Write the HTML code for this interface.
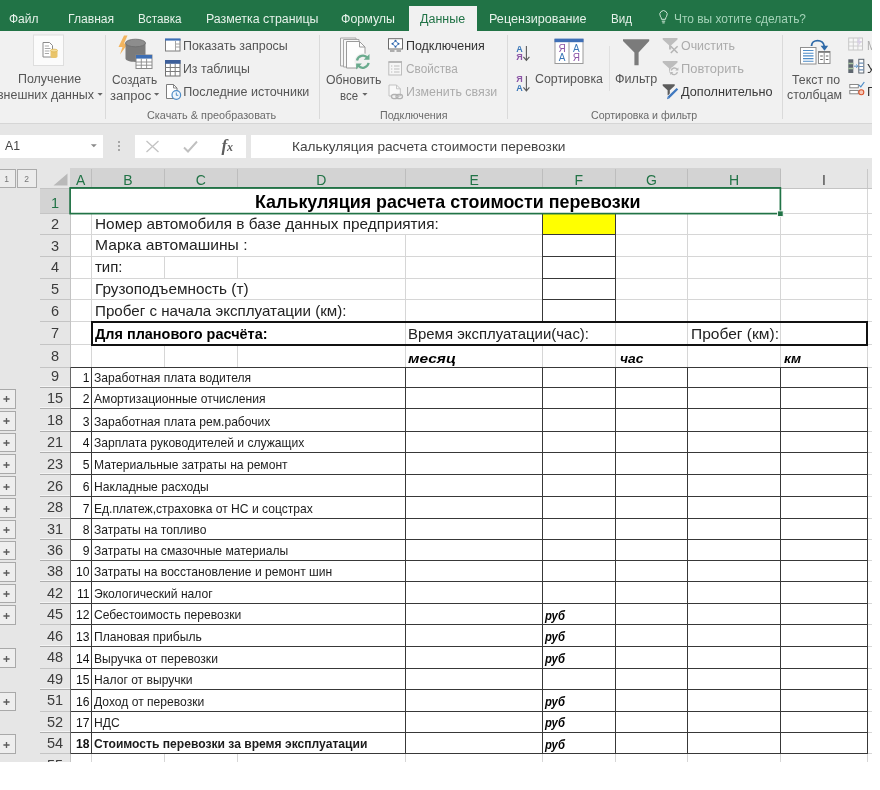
<!DOCTYPE html><html lang="ru"><head><meta charset="utf-8"><title>Калькуляция расчета стоимости перевозки</title><style>
html,body{margin:0;padding:0;background:#fff;}
body{width:880px;height:790px;overflow:hidden;position:relative;font-family:"Liberation Sans",sans-serif;}
#app{position:absolute;left:0;top:0;width:872px;height:762px;overflow:hidden;background:#fff;}
.a{position:absolute;}
.t{position:absolute;white-space:nowrap;transform-origin:0 50%;}
#app{will-change:transform;}
</style></head><body><div id="app">
<div class="a" style="left:0px;top:0px;width:872px;height:31px;background:#217346;"></div>
<div class="a" style="left:0px;top:31px;width:872px;height:92.5px;background:#f1f1f1;"></div>
<div class="a" style="left:408.75px;top:6px;width:68.25px;height:26px;background:#f1f1f1;"></div>
<div class="a" style="left:0px;top:123px;width:872px;height:1px;background:#d6d6d6;"></div>
<div class="a" style="left:0px;top:124px;width:872px;height:638px;background:#e6e6e6;"></div>
<div class="a" style="left:0px;top:134.6px;width:103px;height:23px;background:#fff;"></div>
<div class="a" style="left:135px;top:134.6px;width:111px;height:23px;background:#fff;"></div>
<div class="a" style="left:250.5px;top:134.6px;width:621.5px;height:23px;background:#fff;"></div>
<div class="a" style="left:70px;top:188px;width:802px;height:574px;background:#fff;"></div>
<div class="a" style="left:70px;top:168px;width:710.5px;height:20px;background:#d3d3d3;"></div>
<div class="a" style="left:39.5px;top:188px;width:30.5px;height:25.75px;background:#d3d3d3;"></div>
<div class="a" style="left:104.5px;top:35px;width:1px;height:84px;background:#dadada;"></div>
<div class="a" style="left:319px;top:35px;width:1px;height:84px;background:#dadada;"></div>
<div class="a" style="left:507px;top:35px;width:1px;height:84px;background:#dadada;"></div>
<div class="a" style="left:781.5px;top:35px;width:1px;height:84px;background:#dadada;"></div>
<div class="a" style="left:608.5px;top:46px;width:1px;height:45px;background:#e0e0e0;"></div>
<div class="a" style="left:91px;top:169px;width:1px;height:19px;background:#bdbdbd;"></div>
<div class="a" style="left:164px;top:169px;width:1px;height:19px;background:#bdbdbd;"></div>
<div class="a" style="left:236.5px;top:169px;width:1px;height:19px;background:#bdbdbd;"></div>
<div class="a" style="left:405px;top:169px;width:1px;height:19px;background:#bdbdbd;"></div>
<div class="a" style="left:542.25px;top:169px;width:1px;height:19px;background:#bdbdbd;"></div>
<div class="a" style="left:614.5px;top:169px;width:1px;height:19px;background:#bdbdbd;"></div>
<div class="a" style="left:687.25px;top:169px;width:1px;height:19px;background:#bdbdbd;"></div>
<div class="a" style="left:780px;top:169px;width:1px;height:19px;background:#bdbdbd;"></div>
<div class="a" style="left:867px;top:169px;width:1px;height:19px;background:#c8c8c8;"></div>
<div class="a" style="left:91px;top:188px;width:1px;height:25.75px;background:#d6d6d6;"></div>
<div class="a" style="left:164px;top:188px;width:1px;height:25.75px;background:#d6d6d6;"></div>
<div class="a" style="left:236.5px;top:188px;width:1px;height:25.75px;background:#d6d6d6;"></div>
<div class="a" style="left:405px;top:188px;width:1px;height:25.75px;background:#d6d6d6;"></div>
<div class="a" style="left:542.25px;top:188px;width:1px;height:25.75px;background:#d6d6d6;"></div>
<div class="a" style="left:614.5px;top:188px;width:1px;height:25.75px;background:#d6d6d6;"></div>
<div class="a" style="left:687.25px;top:188px;width:1px;height:25.75px;background:#d6d6d6;"></div>
<div class="a" style="left:780px;top:188px;width:1px;height:25.75px;background:#d6d6d6;"></div>
<div class="a" style="left:867px;top:188px;width:1px;height:25.75px;background:#d6d6d6;"></div>
<div class="a" style="left:91px;top:213.75px;width:1px;height:21px;background:#d6d6d6;"></div>
<div class="a" style="left:542.25px;top:213.75px;width:1px;height:21px;background:#d6d6d6;"></div>
<div class="a" style="left:614.5px;top:213.75px;width:1px;height:21px;background:#d6d6d6;"></div>
<div class="a" style="left:687.25px;top:213.75px;width:1px;height:21px;background:#d6d6d6;"></div>
<div class="a" style="left:780px;top:213.75px;width:1px;height:21px;background:#d6d6d6;"></div>
<div class="a" style="left:867px;top:213.75px;width:1px;height:21px;background:#d6d6d6;"></div>
<div class="a" style="left:91px;top:234.75px;width:1px;height:21.5px;background:#d6d6d6;"></div>
<div class="a" style="left:405px;top:234.75px;width:1px;height:21.5px;background:#d6d6d6;"></div>
<div class="a" style="left:542.25px;top:234.75px;width:1px;height:21.5px;background:#d6d6d6;"></div>
<div class="a" style="left:614.5px;top:234.75px;width:1px;height:21.5px;background:#d6d6d6;"></div>
<div class="a" style="left:687.25px;top:234.75px;width:1px;height:21.5px;background:#d6d6d6;"></div>
<div class="a" style="left:780px;top:234.75px;width:1px;height:21.5px;background:#d6d6d6;"></div>
<div class="a" style="left:867px;top:234.75px;width:1px;height:21.5px;background:#d6d6d6;"></div>
<div class="a" style="left:91px;top:256.25px;width:1px;height:21.75px;background:#d6d6d6;"></div>
<div class="a" style="left:164px;top:256.25px;width:1px;height:21.75px;background:#d6d6d6;"></div>
<div class="a" style="left:236.5px;top:256.25px;width:1px;height:21.75px;background:#d6d6d6;"></div>
<div class="a" style="left:405px;top:256.25px;width:1px;height:21.75px;background:#d6d6d6;"></div>
<div class="a" style="left:542.25px;top:256.25px;width:1px;height:21.75px;background:#d6d6d6;"></div>
<div class="a" style="left:614.5px;top:256.25px;width:1px;height:21.75px;background:#d6d6d6;"></div>
<div class="a" style="left:687.25px;top:256.25px;width:1px;height:21.75px;background:#d6d6d6;"></div>
<div class="a" style="left:780px;top:256.25px;width:1px;height:21.75px;background:#d6d6d6;"></div>
<div class="a" style="left:867px;top:256.25px;width:1px;height:21.75px;background:#d6d6d6;"></div>
<div class="a" style="left:91px;top:278px;width:1px;height:21.75px;background:#d6d6d6;"></div>
<div class="a" style="left:405px;top:278px;width:1px;height:21.75px;background:#d6d6d6;"></div>
<div class="a" style="left:542.25px;top:278px;width:1px;height:21.75px;background:#d6d6d6;"></div>
<div class="a" style="left:614.5px;top:278px;width:1px;height:21.75px;background:#d6d6d6;"></div>
<div class="a" style="left:687.25px;top:278px;width:1px;height:21.75px;background:#d6d6d6;"></div>
<div class="a" style="left:780px;top:278px;width:1px;height:21.75px;background:#d6d6d6;"></div>
<div class="a" style="left:867px;top:278px;width:1px;height:21.75px;background:#d6d6d6;"></div>
<div class="a" style="left:91px;top:299.75px;width:1px;height:22px;background:#d6d6d6;"></div>
<div class="a" style="left:405px;top:299.75px;width:1px;height:22px;background:#d6d6d6;"></div>
<div class="a" style="left:542.25px;top:299.75px;width:1px;height:22px;background:#d6d6d6;"></div>
<div class="a" style="left:614.5px;top:299.75px;width:1px;height:22px;background:#d6d6d6;"></div>
<div class="a" style="left:687.25px;top:299.75px;width:1px;height:22px;background:#d6d6d6;"></div>
<div class="a" style="left:780px;top:299.75px;width:1px;height:22px;background:#d6d6d6;"></div>
<div class="a" style="left:867px;top:299.75px;width:1px;height:22px;background:#d6d6d6;"></div>
<div class="a" style="left:91px;top:321.75px;width:1px;height:22.25px;background:#d6d6d6;"></div>
<div class="a" style="left:405px;top:321.75px;width:1px;height:22.25px;background:#d6d6d6;"></div>
<div class="a" style="left:614.5px;top:321.75px;width:1px;height:22.25px;background:#d6d6d6;"></div>
<div class="a" style="left:687.25px;top:321.75px;width:1px;height:22.25px;background:#d6d6d6;"></div>
<div class="a" style="left:780px;top:321.75px;width:1px;height:22.25px;background:#d6d6d6;"></div>
<div class="a" style="left:867px;top:321.75px;width:1px;height:22.25px;background:#d6d6d6;"></div>
<div class="a" style="left:91px;top:344px;width:1px;height:23px;background:#d6d6d6;"></div>
<div class="a" style="left:164px;top:344px;width:1px;height:23px;background:#d6d6d6;"></div>
<div class="a" style="left:236.5px;top:344px;width:1px;height:23px;background:#d6d6d6;"></div>
<div class="a" style="left:405px;top:344px;width:1px;height:23px;background:#d6d6d6;"></div>
<div class="a" style="left:542.25px;top:344px;width:1px;height:23px;background:#d6d6d6;"></div>
<div class="a" style="left:614.5px;top:344px;width:1px;height:23px;background:#d6d6d6;"></div>
<div class="a" style="left:687.25px;top:344px;width:1px;height:23px;background:#d6d6d6;"></div>
<div class="a" style="left:780px;top:344px;width:1px;height:23px;background:#d6d6d6;"></div>
<div class="a" style="left:867px;top:344px;width:1px;height:23px;background:#d6d6d6;"></div>
<div class="a" style="left:91px;top:367px;width:1px;height:20px;background:#d6d6d6;"></div>
<div class="a" style="left:405px;top:367px;width:1px;height:20px;background:#d6d6d6;"></div>
<div class="a" style="left:542.25px;top:367px;width:1px;height:20px;background:#d6d6d6;"></div>
<div class="a" style="left:614.5px;top:367px;width:1px;height:20px;background:#d6d6d6;"></div>
<div class="a" style="left:687.25px;top:367px;width:1px;height:20px;background:#d6d6d6;"></div>
<div class="a" style="left:780px;top:367px;width:1px;height:20px;background:#d6d6d6;"></div>
<div class="a" style="left:867px;top:367px;width:1px;height:20px;background:#d6d6d6;"></div>
<div class="a" style="left:91px;top:387px;width:1px;height:21.75px;background:#d6d6d6;"></div>
<div class="a" style="left:405px;top:387px;width:1px;height:21.75px;background:#d6d6d6;"></div>
<div class="a" style="left:542.25px;top:387px;width:1px;height:21.75px;background:#d6d6d6;"></div>
<div class="a" style="left:614.5px;top:387px;width:1px;height:21.75px;background:#d6d6d6;"></div>
<div class="a" style="left:687.25px;top:387px;width:1px;height:21.75px;background:#d6d6d6;"></div>
<div class="a" style="left:780px;top:387px;width:1px;height:21.75px;background:#d6d6d6;"></div>
<div class="a" style="left:867px;top:387px;width:1px;height:21.75px;background:#d6d6d6;"></div>
<div class="a" style="left:91px;top:408.75px;width:1px;height:22.25px;background:#d6d6d6;"></div>
<div class="a" style="left:405px;top:408.75px;width:1px;height:22.25px;background:#d6d6d6;"></div>
<div class="a" style="left:542.25px;top:408.75px;width:1px;height:22.25px;background:#d6d6d6;"></div>
<div class="a" style="left:614.5px;top:408.75px;width:1px;height:22.25px;background:#d6d6d6;"></div>
<div class="a" style="left:687.25px;top:408.75px;width:1px;height:22.25px;background:#d6d6d6;"></div>
<div class="a" style="left:780px;top:408.75px;width:1px;height:22.25px;background:#d6d6d6;"></div>
<div class="a" style="left:867px;top:408.75px;width:1px;height:22.25px;background:#d6d6d6;"></div>
<div class="a" style="left:91px;top:431px;width:1px;height:21.5px;background:#d6d6d6;"></div>
<div class="a" style="left:405px;top:431px;width:1px;height:21.5px;background:#d6d6d6;"></div>
<div class="a" style="left:542.25px;top:431px;width:1px;height:21.5px;background:#d6d6d6;"></div>
<div class="a" style="left:614.5px;top:431px;width:1px;height:21.5px;background:#d6d6d6;"></div>
<div class="a" style="left:687.25px;top:431px;width:1px;height:21.5px;background:#d6d6d6;"></div>
<div class="a" style="left:780px;top:431px;width:1px;height:21.5px;background:#d6d6d6;"></div>
<div class="a" style="left:867px;top:431px;width:1px;height:21.5px;background:#d6d6d6;"></div>
<div class="a" style="left:91px;top:452.5px;width:1px;height:22px;background:#d6d6d6;"></div>
<div class="a" style="left:405px;top:452.5px;width:1px;height:22px;background:#d6d6d6;"></div>
<div class="a" style="left:542.25px;top:452.5px;width:1px;height:22px;background:#d6d6d6;"></div>
<div class="a" style="left:614.5px;top:452.5px;width:1px;height:22px;background:#d6d6d6;"></div>
<div class="a" style="left:687.25px;top:452.5px;width:1px;height:22px;background:#d6d6d6;"></div>
<div class="a" style="left:780px;top:452.5px;width:1px;height:22px;background:#d6d6d6;"></div>
<div class="a" style="left:867px;top:452.5px;width:1px;height:22px;background:#d6d6d6;"></div>
<div class="a" style="left:91px;top:474.5px;width:1px;height:21.75px;background:#d6d6d6;"></div>
<div class="a" style="left:405px;top:474.5px;width:1px;height:21.75px;background:#d6d6d6;"></div>
<div class="a" style="left:542.25px;top:474.5px;width:1px;height:21.75px;background:#d6d6d6;"></div>
<div class="a" style="left:614.5px;top:474.5px;width:1px;height:21.75px;background:#d6d6d6;"></div>
<div class="a" style="left:687.25px;top:474.5px;width:1px;height:21.75px;background:#d6d6d6;"></div>
<div class="a" style="left:780px;top:474.5px;width:1px;height:21.75px;background:#d6d6d6;"></div>
<div class="a" style="left:867px;top:474.5px;width:1px;height:21.75px;background:#d6d6d6;"></div>
<div class="a" style="left:91px;top:496.25px;width:1px;height:21.75px;background:#d6d6d6;"></div>
<div class="a" style="left:405px;top:496.25px;width:1px;height:21.75px;background:#d6d6d6;"></div>
<div class="a" style="left:542.25px;top:496.25px;width:1px;height:21.75px;background:#d6d6d6;"></div>
<div class="a" style="left:614.5px;top:496.25px;width:1px;height:21.75px;background:#d6d6d6;"></div>
<div class="a" style="left:687.25px;top:496.25px;width:1px;height:21.75px;background:#d6d6d6;"></div>
<div class="a" style="left:780px;top:496.25px;width:1px;height:21.75px;background:#d6d6d6;"></div>
<div class="a" style="left:867px;top:496.25px;width:1px;height:21.75px;background:#d6d6d6;"></div>
<div class="a" style="left:91px;top:518px;width:1px;height:21.25px;background:#d6d6d6;"></div>
<div class="a" style="left:405px;top:518px;width:1px;height:21.25px;background:#d6d6d6;"></div>
<div class="a" style="left:542.25px;top:518px;width:1px;height:21.25px;background:#d6d6d6;"></div>
<div class="a" style="left:614.5px;top:518px;width:1px;height:21.25px;background:#d6d6d6;"></div>
<div class="a" style="left:687.25px;top:518px;width:1px;height:21.25px;background:#d6d6d6;"></div>
<div class="a" style="left:780px;top:518px;width:1px;height:21.25px;background:#d6d6d6;"></div>
<div class="a" style="left:867px;top:518px;width:1px;height:21.25px;background:#d6d6d6;"></div>
<div class="a" style="left:91px;top:539.25px;width:1px;height:21px;background:#d6d6d6;"></div>
<div class="a" style="left:405px;top:539.25px;width:1px;height:21px;background:#d6d6d6;"></div>
<div class="a" style="left:542.25px;top:539.25px;width:1px;height:21px;background:#d6d6d6;"></div>
<div class="a" style="left:614.5px;top:539.25px;width:1px;height:21px;background:#d6d6d6;"></div>
<div class="a" style="left:687.25px;top:539.25px;width:1px;height:21px;background:#d6d6d6;"></div>
<div class="a" style="left:780px;top:539.25px;width:1px;height:21px;background:#d6d6d6;"></div>
<div class="a" style="left:867px;top:539.25px;width:1px;height:21px;background:#d6d6d6;"></div>
<div class="a" style="left:91px;top:560.25px;width:1px;height:21.5px;background:#d6d6d6;"></div>
<div class="a" style="left:405px;top:560.25px;width:1px;height:21.5px;background:#d6d6d6;"></div>
<div class="a" style="left:542.25px;top:560.25px;width:1px;height:21.5px;background:#d6d6d6;"></div>
<div class="a" style="left:614.5px;top:560.25px;width:1px;height:21.5px;background:#d6d6d6;"></div>
<div class="a" style="left:687.25px;top:560.25px;width:1px;height:21.5px;background:#d6d6d6;"></div>
<div class="a" style="left:780px;top:560.25px;width:1px;height:21.5px;background:#d6d6d6;"></div>
<div class="a" style="left:867px;top:560.25px;width:1px;height:21.5px;background:#d6d6d6;"></div>
<div class="a" style="left:91px;top:581.75px;width:1px;height:21.5px;background:#d6d6d6;"></div>
<div class="a" style="left:405px;top:581.75px;width:1px;height:21.5px;background:#d6d6d6;"></div>
<div class="a" style="left:542.25px;top:581.75px;width:1px;height:21.5px;background:#d6d6d6;"></div>
<div class="a" style="left:614.5px;top:581.75px;width:1px;height:21.5px;background:#d6d6d6;"></div>
<div class="a" style="left:687.25px;top:581.75px;width:1px;height:21.5px;background:#d6d6d6;"></div>
<div class="a" style="left:780px;top:581.75px;width:1px;height:21.5px;background:#d6d6d6;"></div>
<div class="a" style="left:867px;top:581.75px;width:1px;height:21.5px;background:#d6d6d6;"></div>
<div class="a" style="left:91px;top:603.25px;width:1px;height:21.5px;background:#d6d6d6;"></div>
<div class="a" style="left:405px;top:603.25px;width:1px;height:21.5px;background:#d6d6d6;"></div>
<div class="a" style="left:542.25px;top:603.25px;width:1px;height:21.5px;background:#d6d6d6;"></div>
<div class="a" style="left:614.5px;top:603.25px;width:1px;height:21.5px;background:#d6d6d6;"></div>
<div class="a" style="left:687.25px;top:603.25px;width:1px;height:21.5px;background:#d6d6d6;"></div>
<div class="a" style="left:780px;top:603.25px;width:1px;height:21.5px;background:#d6d6d6;"></div>
<div class="a" style="left:867px;top:603.25px;width:1px;height:21.5px;background:#d6d6d6;"></div>
<div class="a" style="left:91px;top:624.75px;width:1px;height:21.5px;background:#d6d6d6;"></div>
<div class="a" style="left:405px;top:624.75px;width:1px;height:21.5px;background:#d6d6d6;"></div>
<div class="a" style="left:542.25px;top:624.75px;width:1px;height:21.5px;background:#d6d6d6;"></div>
<div class="a" style="left:614.5px;top:624.75px;width:1px;height:21.5px;background:#d6d6d6;"></div>
<div class="a" style="left:687.25px;top:624.75px;width:1px;height:21.5px;background:#d6d6d6;"></div>
<div class="a" style="left:780px;top:624.75px;width:1px;height:21.5px;background:#d6d6d6;"></div>
<div class="a" style="left:867px;top:624.75px;width:1px;height:21.5px;background:#d6d6d6;"></div>
<div class="a" style="left:91px;top:646.25px;width:1px;height:21.75px;background:#d6d6d6;"></div>
<div class="a" style="left:405px;top:646.25px;width:1px;height:21.75px;background:#d6d6d6;"></div>
<div class="a" style="left:542.25px;top:646.25px;width:1px;height:21.75px;background:#d6d6d6;"></div>
<div class="a" style="left:614.5px;top:646.25px;width:1px;height:21.75px;background:#d6d6d6;"></div>
<div class="a" style="left:687.25px;top:646.25px;width:1px;height:21.75px;background:#d6d6d6;"></div>
<div class="a" style="left:780px;top:646.25px;width:1px;height:21.75px;background:#d6d6d6;"></div>
<div class="a" style="left:867px;top:646.25px;width:1px;height:21.75px;background:#d6d6d6;"></div>
<div class="a" style="left:91px;top:668px;width:1px;height:21.5px;background:#d6d6d6;"></div>
<div class="a" style="left:405px;top:668px;width:1px;height:21.5px;background:#d6d6d6;"></div>
<div class="a" style="left:542.25px;top:668px;width:1px;height:21.5px;background:#d6d6d6;"></div>
<div class="a" style="left:614.5px;top:668px;width:1px;height:21.5px;background:#d6d6d6;"></div>
<div class="a" style="left:687.25px;top:668px;width:1px;height:21.5px;background:#d6d6d6;"></div>
<div class="a" style="left:780px;top:668px;width:1px;height:21.5px;background:#d6d6d6;"></div>
<div class="a" style="left:867px;top:668px;width:1px;height:21.5px;background:#d6d6d6;"></div>
<div class="a" style="left:91px;top:689.5px;width:1px;height:21.5px;background:#d6d6d6;"></div>
<div class="a" style="left:405px;top:689.5px;width:1px;height:21.5px;background:#d6d6d6;"></div>
<div class="a" style="left:542.25px;top:689.5px;width:1px;height:21.5px;background:#d6d6d6;"></div>
<div class="a" style="left:614.5px;top:689.5px;width:1px;height:21.5px;background:#d6d6d6;"></div>
<div class="a" style="left:687.25px;top:689.5px;width:1px;height:21.5px;background:#d6d6d6;"></div>
<div class="a" style="left:780px;top:689.5px;width:1px;height:21.5px;background:#d6d6d6;"></div>
<div class="a" style="left:867px;top:689.5px;width:1px;height:21.5px;background:#d6d6d6;"></div>
<div class="a" style="left:91px;top:711px;width:1px;height:21.5px;background:#d6d6d6;"></div>
<div class="a" style="left:405px;top:711px;width:1px;height:21.5px;background:#d6d6d6;"></div>
<div class="a" style="left:542.25px;top:711px;width:1px;height:21.5px;background:#d6d6d6;"></div>
<div class="a" style="left:614.5px;top:711px;width:1px;height:21.5px;background:#d6d6d6;"></div>
<div class="a" style="left:687.25px;top:711px;width:1px;height:21.5px;background:#d6d6d6;"></div>
<div class="a" style="left:780px;top:711px;width:1px;height:21.5px;background:#d6d6d6;"></div>
<div class="a" style="left:867px;top:711px;width:1px;height:21.5px;background:#d6d6d6;"></div>
<div class="a" style="left:91px;top:732.5px;width:1px;height:21.25px;background:#d6d6d6;"></div>
<div class="a" style="left:405px;top:732.5px;width:1px;height:21.25px;background:#d6d6d6;"></div>
<div class="a" style="left:542.25px;top:732.5px;width:1px;height:21.25px;background:#d6d6d6;"></div>
<div class="a" style="left:614.5px;top:732.5px;width:1px;height:21.25px;background:#d6d6d6;"></div>
<div class="a" style="left:687.25px;top:732.5px;width:1px;height:21.25px;background:#d6d6d6;"></div>
<div class="a" style="left:780px;top:732.5px;width:1px;height:21.25px;background:#d6d6d6;"></div>
<div class="a" style="left:867px;top:732.5px;width:1px;height:21.25px;background:#d6d6d6;"></div>
<div class="a" style="left:91px;top:753.75px;width:1px;height:8.25px;background:#d6d6d6;"></div>
<div class="a" style="left:164px;top:753.75px;width:1px;height:8.25px;background:#d6d6d6;"></div>
<div class="a" style="left:236.5px;top:753.75px;width:1px;height:8.25px;background:#d6d6d6;"></div>
<div class="a" style="left:405px;top:753.75px;width:1px;height:8.25px;background:#d6d6d6;"></div>
<div class="a" style="left:542.25px;top:753.75px;width:1px;height:8.25px;background:#d6d6d6;"></div>
<div class="a" style="left:614.5px;top:753.75px;width:1px;height:8.25px;background:#d6d6d6;"></div>
<div class="a" style="left:687.25px;top:753.75px;width:1px;height:8.25px;background:#d6d6d6;"></div>
<div class="a" style="left:780px;top:753.75px;width:1px;height:8.25px;background:#d6d6d6;"></div>
<div class="a" style="left:867px;top:753.75px;width:1px;height:8.25px;background:#d6d6d6;"></div>
<div class="a" style="left:70px;top:213.25px;width:802px;height:1px;background:#d6d6d6;"></div>
<div class="a" style="left:70px;top:234.25px;width:802px;height:1px;background:#d6d6d6;"></div>
<div class="a" style="left:70px;top:255.75px;width:802px;height:1px;background:#d6d6d6;"></div>
<div class="a" style="left:70px;top:277.5px;width:802px;height:1px;background:#d6d6d6;"></div>
<div class="a" style="left:70px;top:299.25px;width:802px;height:1px;background:#d6d6d6;"></div>
<div class="a" style="left:70px;top:321.25px;width:802px;height:1px;background:#d6d6d6;"></div>
<div class="a" style="left:70px;top:343.5px;width:802px;height:1px;background:#d6d6d6;"></div>
<div class="a" style="left:70px;top:366.5px;width:802px;height:1px;background:#d6d6d6;"></div>
<div class="a" style="left:70px;top:386.5px;width:802px;height:1px;background:#d6d6d6;"></div>
<div class="a" style="left:70px;top:408.25px;width:802px;height:1px;background:#d6d6d6;"></div>
<div class="a" style="left:70px;top:430.5px;width:802px;height:1px;background:#d6d6d6;"></div>
<div class="a" style="left:70px;top:452px;width:802px;height:1px;background:#d6d6d6;"></div>
<div class="a" style="left:70px;top:474px;width:802px;height:1px;background:#d6d6d6;"></div>
<div class="a" style="left:70px;top:495.75px;width:802px;height:1px;background:#d6d6d6;"></div>
<div class="a" style="left:70px;top:517.5px;width:802px;height:1px;background:#d6d6d6;"></div>
<div class="a" style="left:70px;top:538.75px;width:802px;height:1px;background:#d6d6d6;"></div>
<div class="a" style="left:70px;top:559.75px;width:802px;height:1px;background:#d6d6d6;"></div>
<div class="a" style="left:70px;top:581.25px;width:802px;height:1px;background:#d6d6d6;"></div>
<div class="a" style="left:70px;top:602.75px;width:802px;height:1px;background:#d6d6d6;"></div>
<div class="a" style="left:70px;top:624.25px;width:802px;height:1px;background:#d6d6d6;"></div>
<div class="a" style="left:70px;top:645.75px;width:802px;height:1px;background:#d6d6d6;"></div>
<div class="a" style="left:70px;top:667.5px;width:802px;height:1px;background:#d6d6d6;"></div>
<div class="a" style="left:70px;top:689px;width:802px;height:1px;background:#d6d6d6;"></div>
<div class="a" style="left:70px;top:710.5px;width:802px;height:1px;background:#d6d6d6;"></div>
<div class="a" style="left:70px;top:732px;width:802px;height:1px;background:#d6d6d6;"></div>
<div class="a" style="left:70px;top:753.25px;width:802px;height:1px;background:#d6d6d6;"></div>
<div class="a" style="left:39.5px;top:213.25px;width:30.5px;height:1px;background:#c4c4c4;"></div>
<div class="a" style="left:39.5px;top:234.25px;width:30.5px;height:1px;background:#c4c4c4;"></div>
<div class="a" style="left:39.5px;top:255.75px;width:30.5px;height:1px;background:#c4c4c4;"></div>
<div class="a" style="left:39.5px;top:277.5px;width:30.5px;height:1px;background:#c4c4c4;"></div>
<div class="a" style="left:39.5px;top:299.25px;width:30.5px;height:1px;background:#c4c4c4;"></div>
<div class="a" style="left:39.5px;top:321.25px;width:30.5px;height:1px;background:#c4c4c4;"></div>
<div class="a" style="left:39.5px;top:343.5px;width:30.5px;height:1px;background:#c4c4c4;"></div>
<div class="a" style="left:39.5px;top:366.5px;width:30.5px;height:1px;background:#c4c4c4;"></div>
<div class="a" style="left:39.5px;top:385.5px;width:30.5px;height:1px;background:#f4f4f4;"></div>
<div class="a" style="left:39.5px;top:386.5px;width:30.5px;height:1px;background:#adadad;"></div>
<div class="a" style="left:39.5px;top:407.25px;width:30.5px;height:1px;background:#f4f4f4;"></div>
<div class="a" style="left:39.5px;top:408.25px;width:30.5px;height:1px;background:#adadad;"></div>
<div class="a" style="left:39.5px;top:429.5px;width:30.5px;height:1px;background:#f4f4f4;"></div>
<div class="a" style="left:39.5px;top:430.5px;width:30.5px;height:1px;background:#adadad;"></div>
<div class="a" style="left:39.5px;top:451px;width:30.5px;height:1px;background:#f4f4f4;"></div>
<div class="a" style="left:39.5px;top:452px;width:30.5px;height:1px;background:#adadad;"></div>
<div class="a" style="left:39.5px;top:473px;width:30.5px;height:1px;background:#f4f4f4;"></div>
<div class="a" style="left:39.5px;top:474px;width:30.5px;height:1px;background:#adadad;"></div>
<div class="a" style="left:39.5px;top:494.75px;width:30.5px;height:1px;background:#f4f4f4;"></div>
<div class="a" style="left:39.5px;top:495.75px;width:30.5px;height:1px;background:#adadad;"></div>
<div class="a" style="left:39.5px;top:516.5px;width:30.5px;height:1px;background:#f4f4f4;"></div>
<div class="a" style="left:39.5px;top:517.5px;width:30.5px;height:1px;background:#adadad;"></div>
<div class="a" style="left:39.5px;top:537.75px;width:30.5px;height:1px;background:#f4f4f4;"></div>
<div class="a" style="left:39.5px;top:538.75px;width:30.5px;height:1px;background:#adadad;"></div>
<div class="a" style="left:39.5px;top:558.75px;width:30.5px;height:1px;background:#f4f4f4;"></div>
<div class="a" style="left:39.5px;top:559.75px;width:30.5px;height:1px;background:#adadad;"></div>
<div class="a" style="left:39.5px;top:580.25px;width:30.5px;height:1px;background:#f4f4f4;"></div>
<div class="a" style="left:39.5px;top:581.25px;width:30.5px;height:1px;background:#adadad;"></div>
<div class="a" style="left:39.5px;top:601.75px;width:30.5px;height:1px;background:#f4f4f4;"></div>
<div class="a" style="left:39.5px;top:602.75px;width:30.5px;height:1px;background:#adadad;"></div>
<div class="a" style="left:39.5px;top:624.25px;width:30.5px;height:1px;background:#c4c4c4;"></div>
<div class="a" style="left:39.5px;top:644.75px;width:30.5px;height:1px;background:#f4f4f4;"></div>
<div class="a" style="left:39.5px;top:645.75px;width:30.5px;height:1px;background:#adadad;"></div>
<div class="a" style="left:39.5px;top:667.5px;width:30.5px;height:1px;background:#c4c4c4;"></div>
<div class="a" style="left:39.5px;top:688px;width:30.5px;height:1px;background:#f4f4f4;"></div>
<div class="a" style="left:39.5px;top:689px;width:30.5px;height:1px;background:#adadad;"></div>
<div class="a" style="left:39.5px;top:710.5px;width:30.5px;height:1px;background:#c4c4c4;"></div>
<div class="a" style="left:39.5px;top:731px;width:30.5px;height:1px;background:#f4f4f4;"></div>
<div class="a" style="left:39.5px;top:732px;width:30.5px;height:1px;background:#adadad;"></div>
<div class="a" style="left:39.5px;top:753.25px;width:30.5px;height:1px;background:#c4c4c4;"></div>
<div class="a" style="left:69.5px;top:188px;width:1px;height:574px;background:#c4c4c4;"></div>
<div class="a" style="left:39.5px;top:187.5px;width:832.5px;height:1px;background:#c4c4c4;"></div>
<svg class="a" style="left:52px;top:172px" width="17" height="15"><path d="M15.5 1.5V13.5H1.5Z" fill="#b9b9b9"/></svg>
<div class="a" style="left:71px;top:189px;width:709px;height:24px;background:#fff;"></div>
<div class="a" style="left:542.75px;top:213.75px;width:72.25px;height:21px;background:#ffff00;"></div>
<div class="a" style="left:542.75px;top:213.25px;width:72.25px;height:1px;background:#383838;"></div>
<div class="a" style="left:542.75px;top:234.25px;width:72.25px;height:1px;background:#383838;"></div>
<div class="a" style="left:542.75px;top:255.75px;width:72.25px;height:1px;background:#383838;"></div>
<div class="a" style="left:542.75px;top:277.5px;width:72.25px;height:1px;background:#383838;"></div>
<div class="a" style="left:542.75px;top:299.25px;width:72.25px;height:1px;background:#383838;"></div>
<div class="a" style="left:542.75px;top:321.25px;width:72.25px;height:1px;background:#383838;"></div>
<div class="a" style="left:542.25px;top:213.75px;width:1px;height:108px;background:#383838;"></div>
<div class="a" style="left:614.5px;top:213.75px;width:1px;height:108px;background:#383838;"></div>
<div class="a" style="left:70px;top:366.5px;width:797.5px;height:1px;background:#383838;"></div>
<div class="a" style="left:70px;top:386.5px;width:797.5px;height:1px;background:#383838;"></div>
<div class="a" style="left:70px;top:408.25px;width:797.5px;height:1px;background:#383838;"></div>
<div class="a" style="left:70px;top:430.5px;width:797.5px;height:1px;background:#383838;"></div>
<div class="a" style="left:70px;top:452px;width:797.5px;height:1px;background:#383838;"></div>
<div class="a" style="left:70px;top:474px;width:797.5px;height:1px;background:#383838;"></div>
<div class="a" style="left:70px;top:495.75px;width:797.5px;height:1px;background:#383838;"></div>
<div class="a" style="left:70px;top:517.5px;width:797.5px;height:1px;background:#383838;"></div>
<div class="a" style="left:70px;top:538.75px;width:797.5px;height:1px;background:#383838;"></div>
<div class="a" style="left:70px;top:559.75px;width:797.5px;height:1px;background:#383838;"></div>
<div class="a" style="left:70px;top:581.25px;width:797.5px;height:1px;background:#383838;"></div>
<div class="a" style="left:70px;top:602.75px;width:797.5px;height:1px;background:#383838;"></div>
<div class="a" style="left:70px;top:624.25px;width:797.5px;height:1px;background:#383838;"></div>
<div class="a" style="left:70px;top:645.75px;width:797.5px;height:1px;background:#383838;"></div>
<div class="a" style="left:70px;top:667.5px;width:797.5px;height:1px;background:#383838;"></div>
<div class="a" style="left:70px;top:689px;width:797.5px;height:1px;background:#383838;"></div>
<div class="a" style="left:70px;top:710.5px;width:797.5px;height:1px;background:#383838;"></div>
<div class="a" style="left:70px;top:732px;width:797.5px;height:1px;background:#383838;"></div>
<div class="a" style="left:70px;top:753.25px;width:797.5px;height:1px;background:#383838;"></div>
<div class="a" style="left:70px;top:367px;width:1px;height:386.75px;background:#6a6a6a;"></div>
<div class="a" style="left:91px;top:367px;width:1px;height:386.75px;background:#383838;"></div>
<div class="a" style="left:405px;top:367px;width:1px;height:386.75px;background:#383838;"></div>
<div class="a" style="left:542.25px;top:367px;width:1px;height:386.75px;background:#383838;"></div>
<div class="a" style="left:614.5px;top:367px;width:1px;height:386.75px;background:#383838;"></div>
<div class="a" style="left:687.25px;top:367px;width:1px;height:386.75px;background:#383838;"></div>
<div class="a" style="left:780px;top:367px;width:1px;height:386.75px;background:#383838;"></div>
<div class="a" style="left:867px;top:367px;width:1px;height:386.75px;background:#383838;"></div>
<div class="a" style="left:91px;top:321px;width:777px;height:25px;border:2px solid #111;box-sizing:border-box;"></div>
<svg class="a" style="left:60px;top:180px" width="730" height="42" viewBox="60 180 730 42"><rect x="70.1" y="188" width="710.3" height="25.6" fill="none" stroke="#217346" stroke-width="1.7"/><rect x="777.6" y="210.9" width="5.6" height="5.6" fill="#217346" stroke="#fff" stroke-width="0.9"/></svg>
<div class="a" style="left:70px;top:187px;width:710.5px;height:1px;background:#217346;"></div>
<div class="a" style="left:-1px;top:168.5px;width:17px;height:19.5px;background:#ececec;border:1px solid #ababab;box-sizing:border-box;"></div>
<div class="a" style="left:17px;top:168.5px;width:19.5px;height:19.5px;background:#ececec;border:1px solid #ababab;box-sizing:border-box;"></div>
<div class="a" style="left:-1px;top:389px;width:16.7px;height:19.5px;background:#eeeeee;border:1px solid #a9a9a9;box-sizing:border-box;"></div>
<svg class="a" style="left:0;top:393.5px" width="14" height="10"><path d="M3.4 5H9.6M6.5 1.9V8.1" stroke="#5c5c5c" stroke-width="1.35" fill="none"/></svg>
<div class="a" style="left:-1px;top:411px;width:16.7px;height:19.5px;background:#eeeeee;border:1px solid #a9a9a9;box-sizing:border-box;"></div>
<svg class="a" style="left:0;top:415.5px" width="14" height="10"><path d="M3.4 5H9.6M6.5 1.9V8.1" stroke="#5c5c5c" stroke-width="1.35" fill="none"/></svg>
<div class="a" style="left:-1px;top:433px;width:16.7px;height:18.5px;background:#eeeeee;border:1px solid #a9a9a9;box-sizing:border-box;"></div>
<svg class="a" style="left:0;top:437.5px" width="14" height="10"><path d="M3.4 5H9.6M6.5 1.9V8.1" stroke="#5c5c5c" stroke-width="1.35" fill="none"/></svg>
<div class="a" style="left:-1px;top:454px;width:16.7px;height:19.5px;background:#eeeeee;border:1px solid #a9a9a9;box-sizing:border-box;"></div>
<svg class="a" style="left:0;top:459.5px" width="14" height="10"><path d="M3.4 5H9.6M6.5 1.9V8.1" stroke="#5c5c5c" stroke-width="1.35" fill="none"/></svg>
<div class="a" style="left:-1px;top:476px;width:16.7px;height:19.5px;background:#eeeeee;border:1px solid #a9a9a9;box-sizing:border-box;"></div>
<svg class="a" style="left:0;top:481.5px" width="14" height="10"><path d="M3.4 5H9.6M6.5 1.9V8.1" stroke="#5c5c5c" stroke-width="1.35" fill="none"/></svg>
<div class="a" style="left:-1px;top:498px;width:16.7px;height:19.5px;background:#eeeeee;border:1px solid #a9a9a9;box-sizing:border-box;"></div>
<svg class="a" style="left:0;top:503.5px" width="14" height="10"><path d="M3.4 5H9.6M6.5 1.9V8.1" stroke="#5c5c5c" stroke-width="1.35" fill="none"/></svg>
<div class="a" style="left:-1px;top:520px;width:16.7px;height:18.5px;background:#eeeeee;border:1px solid #a9a9a9;box-sizing:border-box;"></div>
<svg class="a" style="left:0;top:524.5px" width="14" height="10"><path d="M3.4 5H9.6M6.5 1.9V8.1" stroke="#5c5c5c" stroke-width="1.35" fill="none"/></svg>
<div class="a" style="left:-1px;top:541px;width:16.7px;height:18.5px;background:#eeeeee;border:1px solid #a9a9a9;box-sizing:border-box;"></div>
<svg class="a" style="left:0;top:546.5px" width="14" height="10"><path d="M3.4 5H9.6M6.5 1.9V8.1" stroke="#5c5c5c" stroke-width="1.35" fill="none"/></svg>
<div class="a" style="left:-1px;top:562px;width:16.7px;height:19.5px;background:#eeeeee;border:1px solid #a9a9a9;box-sizing:border-box;"></div>
<svg class="a" style="left:0;top:567.5px" width="14" height="10"><path d="M3.4 5H9.6M6.5 1.9V8.1" stroke="#5c5c5c" stroke-width="1.35" fill="none"/></svg>
<div class="a" style="left:-1px;top:584px;width:16.7px;height:18.5px;background:#eeeeee;border:1px solid #a9a9a9;box-sizing:border-box;"></div>
<svg class="a" style="left:0;top:588.5px" width="14" height="10"><path d="M3.4 5H9.6M6.5 1.9V8.1" stroke="#5c5c5c" stroke-width="1.35" fill="none"/></svg>
<div class="a" style="left:-1px;top:605px;width:16.7px;height:19.5px;background:#eeeeee;border:1px solid #a9a9a9;box-sizing:border-box;"></div>
<svg class="a" style="left:0;top:610.5px" width="14" height="10"><path d="M3.4 5H9.6M6.5 1.9V8.1" stroke="#5c5c5c" stroke-width="1.35" fill="none"/></svg>
<div class="a" style="left:-1px;top:648px;width:16.7px;height:19.5px;background:#eeeeee;border:1px solid #a9a9a9;box-sizing:border-box;"></div>
<svg class="a" style="left:0;top:653.5px" width="14" height="10"><path d="M3.4 5H9.6M6.5 1.9V8.1" stroke="#5c5c5c" stroke-width="1.35" fill="none"/></svg>
<div class="a" style="left:-1px;top:692px;width:16.7px;height:18.5px;background:#eeeeee;border:1px solid #a9a9a9;box-sizing:border-box;"></div>
<svg class="a" style="left:0;top:696.5px" width="14" height="10"><path d="M3.4 5H9.6M6.5 1.9V8.1" stroke="#5c5c5c" stroke-width="1.35" fill="none"/></svg>
<div class="a" style="left:-1px;top:734px;width:16.7px;height:19.5px;background:#eeeeee;border:1px solid #a9a9a9;box-sizing:border-box;"></div>
<svg class="a" style="left:0;top:739.5px" width="14" height="10"><path d="M3.4 5H9.6M6.5 1.9V8.1" stroke="#5c5c5c" stroke-width="1.35" fill="none"/></svg>
<svg class="a" style="left:89px;top:143px" width="10" height="6"><path d="M1.8 1.2H7.8L4.8 4.2Z" fill="#8a8a8a"/></svg>
<div class="a" style="left:118px;top:141px;width:2px;height:2px;background:#a6a6a6;"></div>
<div class="a" style="left:118px;top:145px;width:2px;height:2px;background:#a6a6a6;"></div>
<div class="a" style="left:118px;top:149px;width:2px;height:2px;background:#a6a6a6;"></div>
<svg class="a" style="left:144px;top:139px" width="18" height="15"><path d="M2.5 2L14.5 13M14.5 2L2.5 13" stroke="#c3c3c3" stroke-width="1.3" fill="none"/></svg>
<svg class="a" style="left:182px;top:139px" width="18" height="15"><path d="M2 8.5L6 12.5L15 2.5" stroke="#c0c0c0" stroke-width="1.9" fill="none"/></svg>
<div class="a" style="left:221.5px;top:135.5px;font:italic bold 17px/20px 'Liberation Serif',serif;color:#5e5e5e;letter-spacing:-0.3px">f<span style="font-size:12px">x</span></div>
<svg class="a" style="left:0;top:0" width="872" height="124" viewBox="0 0 872 124" fill="none">
<!-- get external data -->
<rect x="33.5" y="35" width="30" height="30.5" fill="#fbfbfb" stroke="#dedede"/>
<path d="M43 42.5H49.5L52.5 45.5V57H43Z" fill="#fff" stroke="#8a8a8a" stroke-width="1"/>
<path d="M44.8 46H49M44.8 48.5H50.5M44.8 51H49.5M44.8 53.5H49" stroke="#a9a9a9" stroke-width="1"/>
<path d="M50.5 50.5V56.5C50.5 58.5 57.5 58.5 57.5 56.5V50.5Z" fill="#e9c46a"/>
<ellipse cx="54" cy="50.5" rx="3.5" ry="1.4" fill="#f4dc9a" stroke="#d9ae45" stroke-width=".6"/>
<!-- new query -->
<path d="M124 35.5L118.5 47H122.5L120 54.5L128 43.5H124L127.5 35.5Z" fill="#f2b45e"/>
<path d="M125.5 43V58.5C125.5 63 145.5 63 145.5 58.5V43Z" fill="#7b7b7b"/>
<ellipse cx="135.5" cy="43" rx="10" ry="3.8" fill="#8d8d8d" stroke="#6c6c6c" stroke-width=".8"/>
<rect x="136" y="55" width="16" height="13.5" fill="#fff" stroke="#8a8a8a"/>
<rect x="136" y="55" width="16" height="3.6" fill="#3d6eb4"/>
<path d="M136 62H152M136 65.2H152M141.3 58.6V68.5M146.6 58.6V68.5" stroke="#8a8a8a" stroke-width=".9"/>
<!-- show queries -->
<rect x="165.5" y="39.5" width="14.5" height="11.5" fill="#fff" stroke="#7d7d7d"/>
<path d="M165 39.5H180.5" stroke="#3d6eb4" stroke-width="2.2"/>
<path d="M175.5 41V51M176 44H180M176 47H180" stroke="#9a9a9a" stroke-width=".9"/>
<!-- from table -->
<rect x="165.5" y="60.5" width="14.5" height="15.5" fill="#fff" stroke="#6f6f6f"/>
<rect x="165" y="60" width="15.5" height="3.8" fill="#3d5f9a"/>
<path d="M165.5 67.5H180M165.5 71.5H180M170.3 63.8V76M175.2 63.8V76" stroke="#7d7d7d" stroke-width="1"/>
<!-- recent sources -->
<path d="M166.5 84.5H173.5L177 88V98.5H166.5Z" fill="#fff" stroke="#7d7d7d"/>
<path d="M173.5 84.5V88H177" stroke="#7d7d7d" stroke-width=".9"/>
<circle cx="176.3" cy="95" r="4.3" fill="#f1f7fc" stroke="#4e8cc7" stroke-width="1.2"/>
<path d="M176.3 92.5V95.3H178.3" stroke="#4e8cc7" stroke-width="1"/>
<!-- refresh all -->
<path d="M340.5 38H356V66H340.5Z" fill="#f6f6f6" stroke="#a6a6a6"/>
<path d="M343.5 39.5H359V67H343.5Z" fill="#f8f8f8" stroke="#a6a6a6"/>
<path d="M346.5 41.5H359.5L365 47V68H346.5Z" fill="#fdfdfd" stroke="#9a9a9a"/>
<path d="M359.5 41.5V47H365" stroke="#9a9a9a"/>
<circle cx="362.8" cy="61.7" r="8.4" fill="#f1f1f1"/>
<path d="M357 60.5A6 6 0 0 1 367.5 57.8" stroke="#6aab8e" stroke-width="2.3"/>
<path d="M368.6 62.9A6 6 0 0 1 358.1 65.6" stroke="#6aab8e" stroke-width="2.3"/>
<path d="M369.5 54V59.8H363.7Z" fill="#6aab8e"/>
<path d="M356.1 69.4V63.6H361.9Z" fill="#6aab8e"/>
<!-- connections -->
<rect x="388.5" y="38.7" width="14" height="10.3" fill="#fff" stroke="#6a6a6a"/>
<path d="M390 51H394.5M396.500 51H401" stroke="#6a6a6a" stroke-width="1.2"/>
<path d="M395.5 40.8L398.5 43.8L395.5 46.8L392.500 43.800Z" fill="#fff" stroke="#3f78bf" stroke-width="1"/>
<circle cx="395.5" cy="40.800" r="1" fill="#2f64a8"/><circle cx="395.5" cy="46.800" r="1" fill="#2f64a8"/><circle cx="392.5" cy="43.800" r="1" fill="#2f64a8"/><circle cx="398.5" cy="43.800" r="1" fill="#2f64a8"/>
<!-- properties (disabled) -->
<rect x="388.800" y="62" width="12.700" height="13" fill="#f6f6f6" stroke="#bdbdbd"/>
<path d="M388.500 62H402" stroke="#b5b5b5" stroke-width="1.800"/>
<path d="M391 66H392.300M391 69H392.300M391 72H392.300M394 66H399.500M394 69H399.500M394 72H399.500" stroke="#bdbdbd" stroke-width="1.100"/>
<!-- edit links (disabled) -->
<path d="M389 85H396.500L400.300 88.800V96H389Z" fill="#f8f8f8" stroke="#c2c2c2"/>
<path d="M396.500 85V88.800H400.300" stroke="#c2c2c2" stroke-width=".9"/>
<rect x="391.500" y="94.500" width="6.500" height="4.200" rx="2.100" fill="#f1f1f1" stroke="#b2b2b2" stroke-width="1.300"/>
<rect x="396" y="94.500" width="6.500" height="4.200" rx="2.100" stroke="#b2b2b2" stroke-width="1.300"/>
<!-- sort A-Z / Z-A arrows -->
<path d="M526.400 46V59.500M523.400 56.800L526.400 60.300L529.400 56.800" stroke="#5a5a5a" stroke-width="1.100"/>
<path d="M526.400 76V90M523.400 87.300L526.400 90.800L529.400 87.300" stroke="#5a5a5a" stroke-width="1.100"/>
<!-- sort big -->
<rect x="555" y="39.500" width="28" height="24" fill="#fff" stroke="#9a9a9a"/>
<rect x="554.500" y="38.600" width="29" height="3.600" fill="#3f6fb6"/>
<path d="M569 42.200V63.500" stroke="#9a9a9a" stroke-width="1"/>
<!-- funnel -->
<path d="M623 39.200H649.200V41L638.600 52.600V65.200H634.400V52.600L623 41Z" fill="#7b7b7b"/>
<!-- clear (disabled) -->
<path d="M662.700 38H677.500V39.500L671.200 45.200V49.500H669V45.200L662.700 39.500Z" fill="#bdbdbd"/>
<path d="M670.800 46.200L677.600 53M677.600 46.200L670.800 53" stroke="#b5b5b5" stroke-width="1.500"/>
<!-- reapply (disabled) -->
<path d="M662.700 61H677.500V62.500L671.200 68.200V72.500H669V68.200L662.700 62.500Z" fill="#bdbdbd"/>
<circle cx="674.300" cy="71.300" r="4.600" fill="#f1f1f1"/>
<path d="M671.200 70.500A3.300 3.300 0 0 1 677.200 69.500M677.400 72.100A3.300 3.300 0 0 1 671.400 73.100" stroke="#b8b8b8" stroke-width="1.400"/>
<path d="M678.400 67.500V70.600H675.300Z M670.200 75.100V72H673.300Z" fill="#b8b8b8"/>
<!-- advanced -->
<path d="M662.700 84.300H674.700V85.700L669.800 90.200V95.200H667.600V90.200L662.700 85.700Z" fill="#5c5c5c"/>
<path d="M677.400 88.700L668.600 97.400" stroke="#f1f1f1" stroke-width="3.600"/>
<path d="M677.400 88.700L668.600 97.400" stroke="#3f78bf" stroke-width="2.300"/>
<path d="M667 99.200L667.700 96.500L669.600 98.300Z" fill="#3f78bf"/>
<!-- text to columns -->
<rect x="800.500" y="47.500" width="15.500" height="16.500" fill="#fff" stroke="#8f8f8f"/>
<path d="M803 50.500H813.500M803 53.200H813.500M803 55.900H813.500M803 58.600H813.500M803 61.300H813.500" stroke="#4e8cc7" stroke-width="1.100"/>
<rect x="818.500" y="51.500" width="11.500" height="12" fill="#fff" stroke="#8f8f8f"/>
<path d="M818.500 52H830" stroke="#777" stroke-width="1.600"/>
<path d="M824.200 52V63.500" stroke="#8f8f8f"/>
<path d="M820.200 56H822.800M820.200 59.500H822.800M825.800 56H828.400M825.800 59.500H828.400" stroke="#666" stroke-width="1"/>
<path d="M811.500 46C811.500 39 823.500 38.500 824.300 46.500" stroke="#2f6aa8" stroke-width="1.900"/>
<path d="M820.600 45.800L824.500 50.800L828.200 45.800Z" fill="#2f6aa8"/>
<!-- flash fill (disabled) -->
<rect x="848.700" y="38" width="13.800" height="12" fill="#f7f7f7" stroke="#c6c6c6"/>
<path d="M848.700 42H862.500M848.700 46H862.500M853.300 38V50M857.900 38V50" stroke="#cbcbcb" stroke-width=".9"/>
<path d="M860 36.500L856.500 42.500H859L857.500 47L862 41H859.500Z" fill="#d9d0e6"/>
<!-- remove duplicates -->
<rect x="848.300" y="59.300" width="5" height="13.700" fill="#5f6770"/>
<rect x="858.800" y="59.300" width="5" height="13.700" fill="#fff" stroke="#5f6770" stroke-width="1"/>
<path d="M848.300 63.500H853.300M848.300 68.500H853.300" stroke="#a9c4a0" stroke-width="1.600"/>
<path d="M859 63.200H863.600M859 66.500H863.600M859 69.800H863.600" stroke="#6f8fb5" stroke-width="1.200"/>
<path d="M854 66.200H857.600M856.200 64.500L857.900 66.200L856.200 67.900" stroke="#4e8cc7" stroke-width=".9"/>
<!-- data validation -->
<rect x="849.800" y="84.500" width="8.500" height="3.300" fill="#fff" stroke="#7d7d7d" stroke-width=".9"/>
<rect x="849.800" y="90.500" width="8.500" height="3.300" fill="#fff" stroke="#7d7d7d" stroke-width=".9"/>
<path d="M858.800 84.800L860.800 86.800L864.300 82" stroke="#4e8cc7" stroke-width="1.200"/>
<circle cx="861.300" cy="92.200" r="2.500" fill="#f6c9b8" stroke="#d9552f" stroke-width="1.100"/>
<!-- dropdown arrows -->
<path d="M97.500 93H102.700L100.100 95.800Z" fill="#666"/>
<path d="M154 93H159.200L156.600 95.800Z" fill="#666"/>
<path d="M362.300 93H367.500L364.900 95.800Z" fill="#666"/>
<!-- bulb -->
<path d="M660.300 16.200A3.700 3.700 0 1 1 666.700 16.200C666 17.300 665.500 18 665.500 19.300H661.500C661.500 18 661 17.300 660.300 16.200Z" stroke="#cfe6d8" stroke-width="1"/>
<path d="M661.800 21.200H665.200M662.300 22.900H664.700" stroke="#cfe6d8" stroke-width="1"/>
</svg>

<span class="t" style="left:8.75px;top:11.50px;font-size:12.5px;line-height:15px;color:#e6f2ea;transform:scaleX(0.9598);">Файл</span>
<span class="t" style="left:68.00px;top:11.50px;font-size:12.5px;line-height:15px;color:#e6f2ea;transform:scaleX(0.9710);">Главная</span>
<span class="t" style="left:138.20px;top:11.50px;font-size:12.5px;line-height:15px;color:#e6f2ea;transform:scaleX(0.9383);">Вставка</span>
<span class="t" style="left:205.50px;top:11.50px;font-size:12.5px;line-height:15px;color:#e6f2ea;transform:scaleX(0.9920);">Разметка страницы</span>
<span class="t" style="left:341.00px;top:11.50px;font-size:12.5px;line-height:15px;color:#e6f2ea;transform:scaleX(0.9925);">Формулы</span>
<span class="t" style="left:420.00px;top:11.50px;font-size:12.5px;line-height:15px;color:#217346;">Данные</span>
<span class="t" style="left:489.00px;top:11.50px;font-size:12.5px;line-height:15px;color:#e6f2ea;transform:scaleX(1.0100);">Рецензирование</span>
<span class="t" style="left:611.00px;top:11.50px;font-size:12.5px;line-height:15px;color:#e6f2ea;transform:scaleX(0.9282);">Вид</span>
<span class="t" style="left:674.00px;top:11.50px;font-size:12.5px;line-height:15px;color:#a4d3b8;transform:scaleX(0.9552);">Что вы хотите сделать?</span>
<span class="t" style="left:18.00px;top:72.00px;font-size:12.5px;line-height:15px;color:#555;transform:scaleX(0.9950);">Получение</span>
<span class="t" style="left:-3.50px;top:87.50px;font-size:12.5px;line-height:15px;color:#555;transform:scaleX(0.9957);">внешних данных</span>
<span class="t" style="left:111.75px;top:72.50px;font-size:12.5px;line-height:15px;color:#555;transform:scaleX(0.9513);">Создать</span>
<span class="t" style="left:110.00px;top:88.90px;font-size:12.5px;line-height:15px;color:#555;transform:scaleX(1.0402);">запрос</span>
<span class="t" style="left:183.25px;top:38.50px;font-size:12.5px;line-height:15px;color:#555;transform:scaleX(0.9957);">Показать запросы</span>
<span class="t" style="left:183.25px;top:61.50px;font-size:12.5px;line-height:15px;color:#555;transform:scaleX(0.9852);">Из таблицы</span>
<span class="t" style="left:183.25px;top:84.75px;font-size:12.5px;line-height:15px;color:#555;">Последние источники</span>
<span class="t" style="left:147.00px;top:108.60px;font-size:11.5px;line-height:13.8px;color:#6a6a6a;transform:scaleX(0.9449);">Скачать &amp; преобразовать</span>
<span class="t" style="left:325.50px;top:72.50px;font-size:12.5px;line-height:15px;color:#555;transform:scaleX(0.9804);">Обновить</span>
<span class="t" style="left:340.00px;top:88.50px;font-size:12.5px;line-height:15px;color:#555;transform:scaleX(0.9136);">все</span>
<span class="t" style="left:406.25px;top:38.50px;font-size:12.5px;line-height:15px;color:#333;transform:scaleX(0.9959);">Подключения</span>
<span class="t" style="left:406.25px;top:61.50px;font-size:12.5px;line-height:15px;color:#ababab;transform:scaleX(0.9428);">Свойства</span>
<span class="t" style="left:406.25px;top:84.75px;font-size:12.5px;line-height:15px;color:#ababab;transform:scaleX(0.9908);">Изменить связи</span>
<span class="t" style="left:380.00px;top:108.60px;font-size:11.5px;line-height:13.8px;color:#6a6a6a;transform:scaleX(0.9276);">Подключения</span>
<span class="t" style="left:534.50px;top:72.25px;font-size:12.5px;line-height:15px;color:#555;transform:scaleX(0.9911);">Сортировка</span>
<span class="t" style="left:614.50px;top:72.25px;font-size:12.5px;line-height:15px;color:#555;transform:scaleX(1.0060);">Фильтр</span>
<span class="t" style="left:681.00px;top:38.50px;font-size:12.5px;line-height:15px;color:#ababab;transform:scaleX(0.9922);">Очистить</span>
<span class="t" style="left:681.00px;top:61.50px;font-size:12.5px;line-height:15px;color:#ababab;transform:scaleX(1.0325);">Повторить</span>
<span class="t" style="left:681.00px;top:84.75px;font-size:12.5px;line-height:15px;color:#3a3a3a;transform:scaleX(1.0170);">Дополнительно</span>
<span class="t" style="left:591.25px;top:108.60px;font-size:11.5px;line-height:13.8px;color:#6a6a6a;transform:scaleX(0.9217);">Сортировка и фильтр</span>
<span class="t" style="left:791.60px;top:72.50px;font-size:12.5px;line-height:15px;color:#555;transform:scaleX(0.9862);">Текст по</span>
<span class="t" style="left:787.30px;top:88.00px;font-size:12.5px;line-height:15px;color:#555;transform:scaleX(0.9879);">столбцам</span>
<span class="t" style="left:867.00px;top:38.50px;font-size:12.5px;line-height:15px;color:#ababab;transform:scaleX(0.8636);">М</span>
<span class="t" style="left:867.00px;top:61.50px;font-size:12.5px;line-height:15px;color:#333;transform:scaleX(1.0059);">У</span>
<span class="t" style="left:867.00px;top:84.75px;font-size:12.5px;line-height:15px;color:#333;transform:scaleX(1.0323);">Г</span>
<span class="t" style="left:516.15px;top:44.30px;font-size:9px;line-height:10.8px;color:#3a77b8;font-weight:bold;">А</span>
<span class="t" style="left:516.17px;top:51.90px;font-size:9px;line-height:10.8px;color:#8c55a6;font-weight:bold;">Я</span>
<span class="t" style="left:516.17px;top:74.30px;font-size:9px;line-height:10.8px;color:#8c55a6;font-weight:bold;">Я</span>
<span class="t" style="left:516.15px;top:82.60px;font-size:9px;line-height:10.8px;color:#3a77b8;font-weight:bold;">А</span>
<span class="t" style="left:558.38px;top:43.40px;font-size:10px;line-height:12px;color:#8c55a6;">Я</span>
<span class="t" style="left:558.66px;top:52.20px;font-size:10px;line-height:12px;color:#3a77b8;">А</span>
<span class="t" style="left:572.96px;top:43.40px;font-size:10px;line-height:12px;color:#3a77b8;">А</span>
<span class="t" style="left:572.68px;top:52.20px;font-size:10px;line-height:12px;color:#8c55a6;">Я</span>
<span class="t" style="left:4.50px;top:139.00px;font-size:12.5px;line-height:15px;color:#444;transform:scaleX(0.9806);">A1</span>
<span class="t" style="left:292.00px;top:138.82px;font-size:12.8px;line-height:15.36px;color:#444;transform:scaleX(1.0686);">Калькуляция расчета стоимости перевозки</span>
<span class="t" style="left:76.08px;top:171.60px;font-size:14px;line-height:16.8px;color:#217346;">A</span>
<span class="t" style="left:123.33px;top:171.60px;font-size:14px;line-height:16.8px;color:#217346;">B</span>
<span class="t" style="left:195.69px;top:171.60px;font-size:14px;line-height:16.8px;color:#217346;">C</span>
<span class="t" style="left:316.19px;top:171.60px;font-size:14px;line-height:16.8px;color:#217346;">D</span>
<span class="t" style="left:469.45px;top:171.60px;font-size:14px;line-height:16.8px;color:#217346;">E</span>
<span class="t" style="left:574.59px;top:171.60px;font-size:14px;line-height:16.8px;color:#217346;">F</span>
<span class="t" style="left:645.93px;top:171.60px;font-size:14px;line-height:16.8px;color:#217346;">G</span>
<span class="t" style="left:729.06px;top:171.60px;font-size:14px;line-height:16.8px;color:#217346;">H</span>
<span class="t" style="left:822.05px;top:171.60px;font-size:14px;line-height:16.8px;color:#444;">I</span>
<span class="t" style="left:50.96px;top:194.80px;font-size:14.5px;line-height:17.4px;color:#217346;">1</span>
<span class="t" style="left:50.96px;top:216.05px;font-size:14.5px;line-height:17.4px;color:#3c3c3c;">2</span>
<span class="t" style="left:50.96px;top:237.55px;font-size:14.5px;line-height:17.4px;color:#3c3c3c;">3</span>
<span class="t" style="left:50.96px;top:259.30px;font-size:14.5px;line-height:17.4px;color:#3c3c3c;">4</span>
<span class="t" style="left:50.96px;top:281.05px;font-size:14.5px;line-height:17.4px;color:#3c3c3c;">5</span>
<span class="t" style="left:50.96px;top:303.05px;font-size:14.5px;line-height:17.4px;color:#3c3c3c;">6</span>
<span class="t" style="left:50.96px;top:325.30px;font-size:14.5px;line-height:17.4px;color:#3c3c3c;">7</span>
<span class="t" style="left:50.96px;top:348.30px;font-size:14.5px;line-height:17.4px;color:#3c3c3c;">8</span>
<span class="t" style="left:50.96px;top:368.30px;font-size:14.5px;line-height:17.4px;color:#3c3c3c;">9</span>
<span class="t" style="left:46.93px;top:390.05px;font-size:14.5px;line-height:17.4px;color:#3c3c3c;">15</span>
<span class="t" style="left:46.93px;top:412.30px;font-size:14.5px;line-height:17.4px;color:#3c3c3c;">18</span>
<span class="t" style="left:46.93px;top:433.80px;font-size:14.5px;line-height:17.4px;color:#3c3c3c;">21</span>
<span class="t" style="left:46.93px;top:455.80px;font-size:14.5px;line-height:17.4px;color:#3c3c3c;">23</span>
<span class="t" style="left:46.93px;top:477.55px;font-size:14.5px;line-height:17.4px;color:#3c3c3c;">26</span>
<span class="t" style="left:46.93px;top:499.30px;font-size:14.5px;line-height:17.4px;color:#3c3c3c;">28</span>
<span class="t" style="left:46.93px;top:520.55px;font-size:14.5px;line-height:17.4px;color:#3c3c3c;">31</span>
<span class="t" style="left:46.93px;top:541.55px;font-size:14.5px;line-height:17.4px;color:#3c3c3c;">36</span>
<span class="t" style="left:46.93px;top:563.05px;font-size:14.5px;line-height:17.4px;color:#3c3c3c;">38</span>
<span class="t" style="left:46.93px;top:584.55px;font-size:14.5px;line-height:17.4px;color:#3c3c3c;">42</span>
<span class="t" style="left:46.93px;top:606.05px;font-size:14.5px;line-height:17.4px;color:#3c3c3c;">45</span>
<span class="t" style="left:46.93px;top:627.55px;font-size:14.5px;line-height:17.4px;color:#3c3c3c;">46</span>
<span class="t" style="left:46.93px;top:649.30px;font-size:14.5px;line-height:17.4px;color:#3c3c3c;">48</span>
<span class="t" style="left:46.93px;top:670.80px;font-size:14.5px;line-height:17.4px;color:#3c3c3c;">49</span>
<span class="t" style="left:46.93px;top:692.30px;font-size:14.5px;line-height:17.4px;color:#3c3c3c;">51</span>
<span class="t" style="left:46.93px;top:713.80px;font-size:14.5px;line-height:17.4px;color:#3c3c3c;">52</span>
<span class="t" style="left:46.93px;top:735.05px;font-size:14.5px;line-height:17.4px;color:#3c3c3c;">54</span>
<span class="t" style="left:46.93px;top:756.80px;font-size:14.5px;line-height:17.4px;color:#3c3c3c;">55</span>
<span class="t" style="left:254.50px;top:191.57px;font-size:17.8px;line-height:21.36px;color:#000;font-weight:bold;transform:scaleX(1.0044);">Калькуляция расчета стоимости перевозки</span>
<span class="t" style="left:95.00px;top:215.59px;font-size:14.6px;line-height:17.52px;color:#222;transform:scaleX(1.0526);">Номер автомобиля в базе данных предприятия:</span>
<span class="t" style="left:95.00px;top:237.09px;font-size:14.6px;line-height:17.52px;color:#222;transform:scaleX(1.0717);">Марка автомашины :</span>
<span class="t" style="left:95.00px;top:258.84px;font-size:14.6px;line-height:17.52px;color:#222;transform:scaleX(1.0262);">тип:</span>
<span class="t" style="left:95.00px;top:280.59px;font-size:14.6px;line-height:17.52px;color:#222;transform:scaleX(1.0488);">Грузоподъемность (т)</span>
<span class="t" style="left:95.00px;top:302.59px;font-size:14.6px;line-height:17.52px;color:#222;transform:scaleX(1.0383);">Пробег с начала эксплуатации (км):</span>
<span class="t" style="left:95.00px;top:326.34px;font-size:14.6px;line-height:17.52px;color:#000;font-weight:bold;transform:scaleX(0.9902);">Для планового расчёта:</span>
<span class="t" style="left:408.00px;top:326.34px;font-size:14.6px;line-height:17.52px;color:#222;transform:scaleX(1.0244);">Время эксплуатации(час):</span>
<span class="t" style="left:691.00px;top:326.34px;font-size:14.6px;line-height:17.52px;color:#222;transform:scaleX(1.0653);">Пробег (км):</span>
<span class="t" style="left:408.00px;top:350.50px;font-size:13px;line-height:15.6px;color:#000;font-weight:bold;font-style:italic;transform:scaleX(1.1912);">месяц</span>
<span class="t" style="left:620.00px;top:350.50px;font-size:13px;line-height:15.6px;color:#000;font-weight:bold;font-style:italic;transform:scaleX(1.0659);">час</span>
<span class="t" style="left:784.00px;top:350.50px;font-size:13px;line-height:15.6px;color:#000;font-weight:bold;font-style:italic;transform:scaleX(1.0482);">км</span>
<span class="t" style="left:94.00px;top:370.74px;font-size:12.1px;line-height:14.52px;color:#1c1c1c;">Заработная плата водителя</span>
<span class="t" style="left:82.77px;top:370.74px;font-size:12.1px;line-height:14.52px;color:#111;">1</span>
<span class="t" style="left:94.00px;top:392.49px;font-size:12.1px;line-height:14.52px;color:#1c1c1c;">Амортизационные отчисления</span>
<span class="t" style="left:82.77px;top:392.49px;font-size:12.1px;line-height:14.52px;color:#111;">2</span>
<span class="t" style="left:94.00px;top:414.74px;font-size:12.1px;line-height:14.52px;color:#1c1c1c;">Заработная плата рем.рабочих</span>
<span class="t" style="left:82.77px;top:414.74px;font-size:12.1px;line-height:14.52px;color:#111;">3</span>
<span class="t" style="left:94.00px;top:436.24px;font-size:12.1px;line-height:14.52px;color:#1c1c1c;">Зарплата руководителей и служащих</span>
<span class="t" style="left:82.77px;top:436.24px;font-size:12.1px;line-height:14.52px;color:#111;">4</span>
<span class="t" style="left:94.00px;top:458.24px;font-size:12.1px;line-height:14.52px;color:#1c1c1c;">Материальные затраты на ремонт</span>
<span class="t" style="left:82.77px;top:458.24px;font-size:12.1px;line-height:14.52px;color:#111;">5</span>
<span class="t" style="left:94.00px;top:479.99px;font-size:12.1px;line-height:14.52px;color:#1c1c1c;">Накладные расходы</span>
<span class="t" style="left:82.77px;top:479.99px;font-size:12.1px;line-height:14.52px;color:#111;">6</span>
<span class="t" style="left:94.00px;top:501.74px;font-size:12.1px;line-height:14.52px;color:#1c1c1c;">Ед.платеж,страховка от НС и соцстрах</span>
<span class="t" style="left:82.77px;top:501.74px;font-size:12.1px;line-height:14.52px;color:#111;">7</span>
<span class="t" style="left:94.00px;top:522.99px;font-size:12.1px;line-height:14.52px;color:#1c1c1c;">Затраты на топливо</span>
<span class="t" style="left:82.77px;top:522.99px;font-size:12.1px;line-height:14.52px;color:#111;">8</span>
<span class="t" style="left:94.00px;top:543.99px;font-size:12.1px;line-height:14.52px;color:#1c1c1c;">Затраты на смазочные материалы</span>
<span class="t" style="left:82.77px;top:543.99px;font-size:12.1px;line-height:14.52px;color:#111;">9</span>
<span class="t" style="left:94.00px;top:565.49px;font-size:12.1px;line-height:14.52px;color:#1c1c1c;">Затраты на восстановление и ремонт шин</span>
<span class="t" style="left:76.05px;top:565.49px;font-size:12.1px;line-height:14.52px;color:#111;">10</span>
<span class="t" style="left:94.00px;top:586.99px;font-size:12.1px;line-height:14.52px;color:#1c1c1c;">Экологический налог</span>
<span class="t" style="left:76.94px;top:586.99px;font-size:12.1px;line-height:14.52px;color:#111;">11</span>
<span class="t" style="left:94.00px;top:608.49px;font-size:12.1px;line-height:14.52px;color:#1c1c1c;">Себестоимость перевозки</span>
<span class="t" style="left:76.05px;top:608.49px;font-size:12.1px;line-height:14.52px;color:#111;">12</span>
<span class="t" style="left:545.00px;top:608.55px;font-size:12px;line-height:14.4px;color:#000;font-weight:bold;font-style:italic;transform:scaleX(0.9398);">руб</span>
<span class="t" style="left:94.00px;top:629.99px;font-size:12.1px;line-height:14.52px;color:#1c1c1c;">Плановая прибыль</span>
<span class="t" style="left:76.05px;top:629.99px;font-size:12.1px;line-height:14.52px;color:#111;">13</span>
<span class="t" style="left:545.00px;top:630.05px;font-size:12px;line-height:14.4px;color:#000;font-weight:bold;font-style:italic;transform:scaleX(0.9398);">руб</span>
<span class="t" style="left:94.00px;top:651.74px;font-size:12.1px;line-height:14.52px;color:#1c1c1c;">Выручка от перевозки</span>
<span class="t" style="left:76.05px;top:651.74px;font-size:12.1px;line-height:14.52px;color:#111;">14</span>
<span class="t" style="left:545.00px;top:651.80px;font-size:12px;line-height:14.4px;color:#000;font-weight:bold;font-style:italic;transform:scaleX(0.9398);">руб</span>
<span class="t" style="left:94.00px;top:673.24px;font-size:12.1px;line-height:14.52px;color:#1c1c1c;">Налог от выручки</span>
<span class="t" style="left:76.05px;top:673.24px;font-size:12.1px;line-height:14.52px;color:#111;">15</span>
<span class="t" style="left:94.00px;top:694.74px;font-size:12.1px;line-height:14.52px;color:#1c1c1c;">Доход от перевозки</span>
<span class="t" style="left:76.05px;top:694.74px;font-size:12.1px;line-height:14.52px;color:#111;">16</span>
<span class="t" style="left:545.00px;top:694.80px;font-size:12px;line-height:14.4px;color:#000;font-weight:bold;font-style:italic;transform:scaleX(0.9398);">руб</span>
<span class="t" style="left:94.00px;top:716.24px;font-size:12.1px;line-height:14.52px;color:#1c1c1c;">НДС</span>
<span class="t" style="left:76.05px;top:716.24px;font-size:12.1px;line-height:14.52px;color:#111;">17</span>
<span class="t" style="left:545.00px;top:716.30px;font-size:12px;line-height:14.4px;color:#000;font-weight:bold;font-style:italic;transform:scaleX(0.9398);">руб</span>
<span class="t" style="left:94.00px;top:737.49px;font-size:12.1px;line-height:14.52px;color:#1c1c1c;font-weight:bold;">Стоимость перевозки за время эксплуатации</span>
<span class="t" style="left:76.05px;top:737.49px;font-size:12.1px;line-height:14.52px;color:#111;font-weight:bold;">18</span>
<span class="t" style="left:545.00px;top:737.55px;font-size:12px;line-height:14.4px;color:#000;font-weight:bold;font-style:italic;transform:scaleX(0.9398);">руб</span>
<span class="t" style="left:4.13px;top:173.90px;font-size:8.5px;line-height:10.2px;color:#777;">1</span>
<span class="t" style="left:24.13px;top:173.90px;font-size:8.5px;line-height:10.2px;color:#777;">2</span>
</div></body></html>
